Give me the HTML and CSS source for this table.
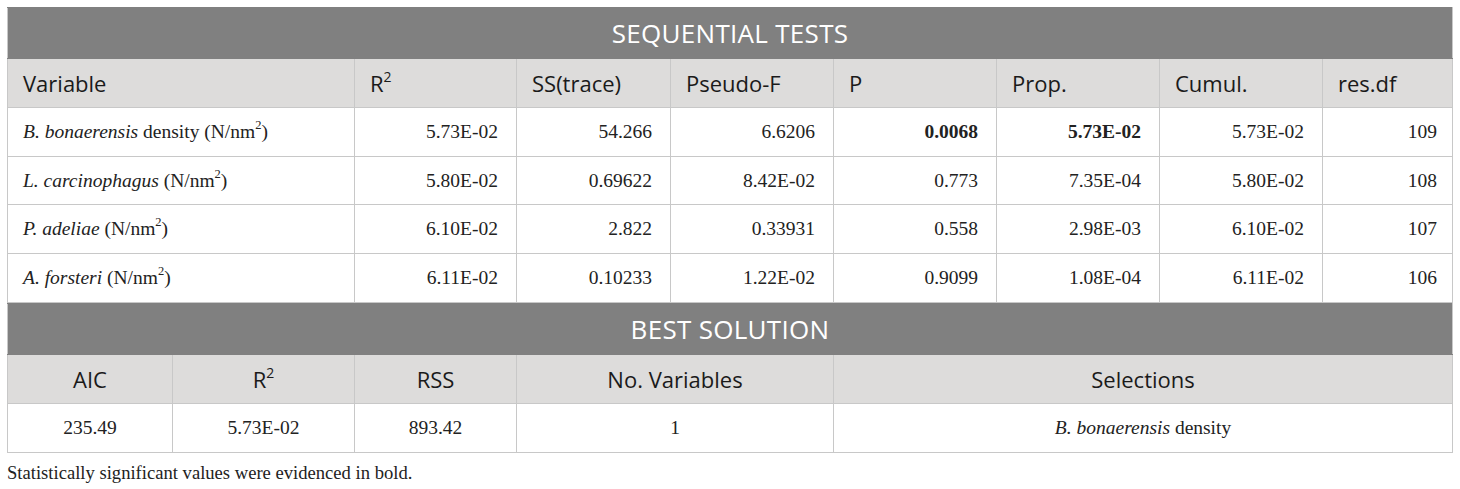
FILE: index.html
```html
<!DOCTYPE html>
<html>
<head>
<meta charset="utf-8">
<link rel="stylesheet" href="styles.css">
</head>
<body>
<div class="wrap">
  <table class="tbl seq">
    <colgroup>
      <col style="width:347px"><col style="width:162px"><col style="width:154px"><col style="width:163px">
      <col style="width:163px"><col style="width:163px"><col style="width:163px"><col style="width:130px">
    </colgroup>
    <thead>
      <tr class="band"><th colspan="8">SEQUENTIAL TESTS</th></tr>
      <tr class="head">
        <th>Variable</th><th>R<sup>2</sup></th><th>SS(trace)</th><th>Pseudo-F</th><th>P</th><th>Prop.</th><th>Cumul.</th><th>res.df</th>
      </tr>
    </thead>
    <tbody>
      <tr><td class="name"><i>B. bonaerensis</i> density (N/nm<sup>2</sup>)</td><td>5.73E-02</td><td>54.266</td><td>6.6206</td><td><b>0.0068</b></td><td><b>5.73E-02</b></td><td>5.73E-02</td><td class="last">109</td></tr>
      <tr><td class="name"><i>L. carcinophagus</i> (N/nm<sup>2</sup>)</td><td>5.80E-02</td><td>0.69622</td><td>8.42E-02</td><td>0.773</td><td>7.35E-04</td><td>5.80E-02</td><td class="last">108</td></tr>
      <tr><td class="name"><i>P. adeliae</i> (N/nm<sup>2</sup>)</td><td>6.10E-02</td><td>2.822</td><td>0.33931</td><td>0.558</td><td>2.98E-03</td><td>6.10E-02</td><td class="last">107</td></tr>
      <tr><td class="name"><i>A. forsteri</i> (N/nm<sup>2</sup>)</td><td>6.11E-02</td><td>0.10233</td><td>1.22E-02</td><td>0.9099</td><td>1.08E-04</td><td>6.11E-02</td><td class="last">106</td></tr>
    </tbody>
  </table>
  <table class="tbl best">
    <colgroup>
      <col style="width:165px"><col style="width:182px"><col style="width:162px"><col style="width:317px"><col style="width:619px">
    </colgroup>
    <thead>
      <tr class="band"><th colspan="5">BEST SOLUTION</th></tr>
      <tr class="head"><th>AIC</th><th>R<sup>2</sup></th><th>RSS</th><th>No. Variables</th><th>Selections</th></tr>
    </thead>
    <tbody>
      <tr><td>235.49</td><td>5.73E-02</td><td>893.42</td><td>1</td><td><i>B. bonaerensis</i> density</td></tr>
    </tbody>
  </table>
  <p class="note">Statistically significant values were evidenced in bold.</p>
</div>
</body>
</html>
```

FILE: styles.css
```css
html, body {
  margin: 0;
  padding: 0;
  background: #ffffff;
}
.wrap {
  padding: 7px 0 0 7px;
  width: 1446px;
}
.tbl {
  border-collapse: collapse;
  table-layout: fixed;
  width: 1446px;
}
.tbl th, .tbl td {
  border: 1px solid #c8c8c8;
  padding: 0 15px;
  box-sizing: border-box;
}
.band th {
  background: #808080;
  color: #ffffff;
  font-family: "Open Sans", "Liberation Sans", sans-serif;
  font-weight: 400;
  font-size: 26px;
  height: 51px;
  text-align: center;
  border-color: #808080;
  border-left-color: #c8c8c8;
  border-right-color: #c8c8c8;
  letter-spacing: 0.3px;
}
.head th {
  background: #dddcdb;
  color: #1a1a1a;
  font-family: "Open Sans", "Liberation Sans", sans-serif;
  font-weight: 400;
  font-size: 22px;
  height: 49px;
  text-align: left;
}
.best .head th {
  text-align: center;
}
.head sup {
  font-size: 14px;
  vertical-align: 10px;
  line-height: 0;
}
.tbl td {
  font-family: "Liberation Serif", "Times New Roman", serif;
  font-size: 19.5px;
  color: #222222;
  height: 49px;
  text-align: right;
  padding-right: 18px;
}
.tbl td.last {
  padding-right: 15px;
}
.seq tbody tr td {
  height: 48.7px;
}
.tbl td.name {
  text-align: left;
}
.best td {
  text-align: center;
  padding-right: 15px;
}
.tbl td sup {
  font-size: 12.5px;
  vertical-align: 9px;
  line-height: 0;
}
.tbl b {
  font-weight: 700;
}
.note {
  margin: 9px 0 0 0;
  font-family: "Liberation Serif", "Times New Roman", serif;
  font-size: 18.6px;
  color: #222222;
}
```
